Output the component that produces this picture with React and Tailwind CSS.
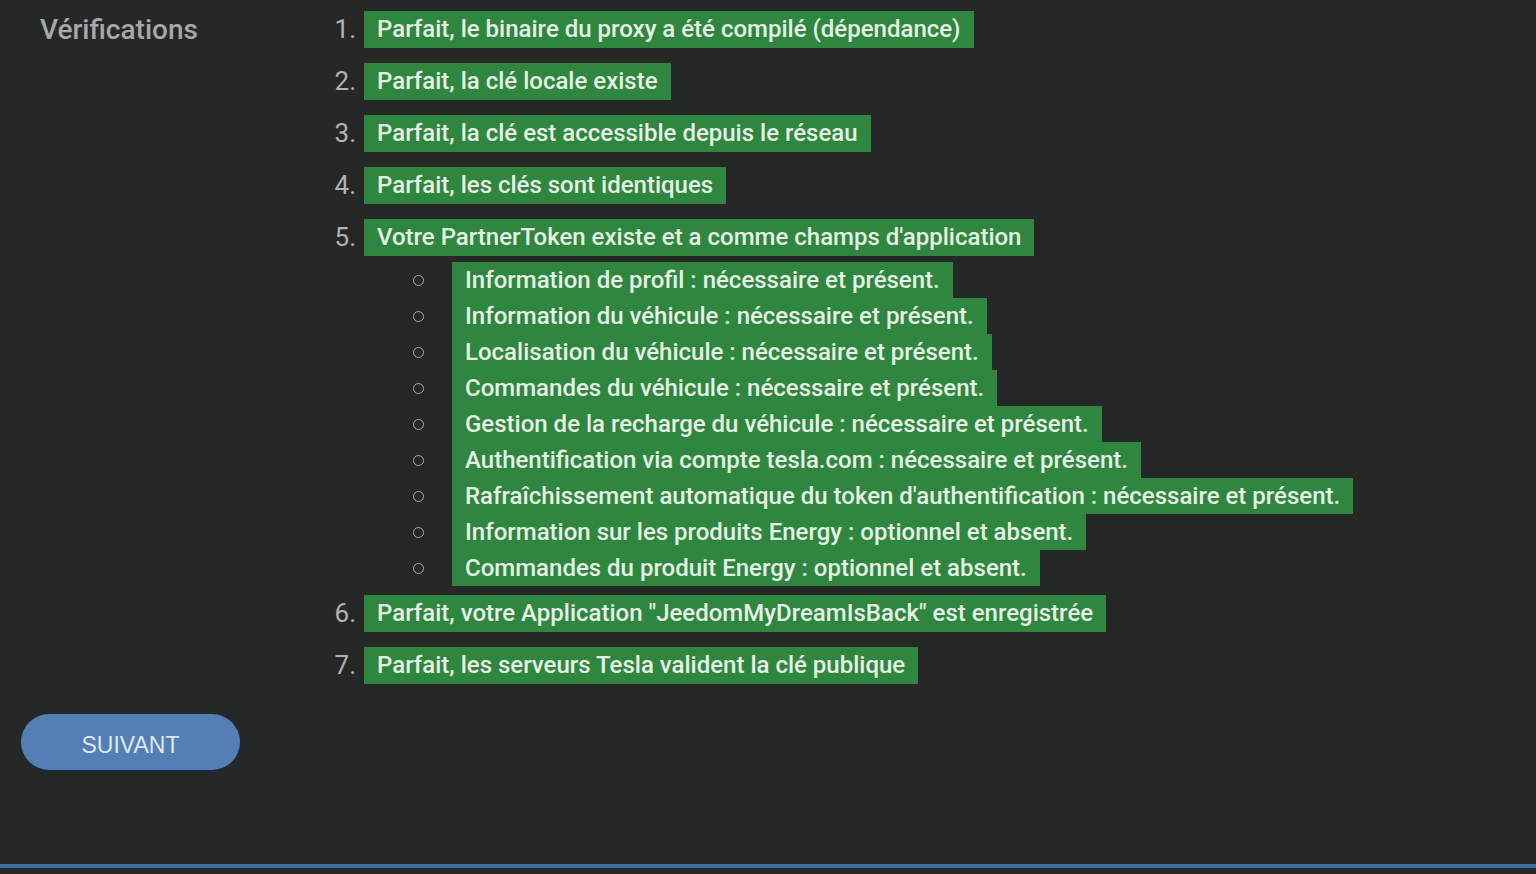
import React from "react";

const steps = [
  "Parfait, le binaire du proxy a été compilé (dépendance)",
  "Parfait, la clé locale existe",
  "Parfait, la clé est accessible depuis le réseau",
  "Parfait, les clés sont identiques",
  "Votre PartnerToken existe et a comme champs d'application",
  "Parfait, votre Application \"JeedomMyDreamIsBack\" est enregistrée",
  "Parfait, les serveurs Tesla valident la clé publique",
];

const scopes = [
  "Information de profil : nécessaire et présent.",
  "Information du véhicule : nécessaire et présent.",
  "Localisation du véhicule : nécessaire et présent.",
  "Commandes du véhicule : nécessaire et présent.",
  "Gestion de la recharge du véhicule : nécessaire et présent.",
  "Authentification via compte tesla.com : nécessaire et présent.",
  "Rafraîchissement automatique du token d'authentification : nécessaire et présent.",
  "Information sur les produits Energy : optionnel et absent.",
  "Commandes du produit Energy : optionnel et absent.",
];

function Ok({ children, tall }) {
  return (
    <span
      className={
        "inline-block bg-[#2f863f] px-[13px] text-[#e6f1e6] whitespace-nowrap " +
        (tall ? "leading-[37px]" : "leading-[36px]")
      }
    >
      {children}
    </span>
  );
}

export default function App() {
  return (
    <div className="relative h-[874px] w-full overflow-hidden bg-[#262727] font-['Roboto',sans-serif]">
      <div className="flex pt-[11px]">
        {/* Label */}
        <div className="w-[335px] shrink-0 pl-[40px] text-[28px] font-medium leading-[37px] text-[#a8a8a8]">
          Vérifications
        </div>

        {/* Checks */}
        <ol className="flex flex-col text-[24px] font-medium">
          {steps.map((s, i) => (
            <li key={i} className={i === 0 ? "" : i === 5 ? "mt-[9px]" : "mt-[15px]"}>
              <div className="flex items-center">
                <span className="w-[29px] -ml-[8px] mr-[8px] text-right text-[26px] font-normal leading-[37px] text-[#b3b3b3]">
                  {i + 1}.
                </span>
                <Ok tall>{s}</Ok>
              </div>
              {i === 4 && (
                <ul className="mt-[6px]">
                  {scopes.map((c) => (
                    <li key={c} className="flex items-center">
                      <span className="ml-[78px] mr-[28px] h-[11px] w-[11px] rounded-full border-[1.5px] border-[#a9a9a9]" />
                      <Ok>{c}</Ok>
                    </li>
                  ))}
                </ul>
              )}
            </li>
          ))}
        </ol>
      </div>

      <div className="mt-[30px] pl-[21px]">
        <button className="h-[56px] w-[219px] rounded-full bg-[#537fb5] pt-[6px] font-['Liberation_Sans',Arial,sans-serif] text-[23px] text-[#dde8f4] shadow-[0_2px_0_#1d2a3a]">
          SUIVANT
        </button>
      </div>

      <div className="absolute bottom-[6px] left-0 h-[4px] w-full bg-[#3c70a2]" />
    </div>
  );
}
